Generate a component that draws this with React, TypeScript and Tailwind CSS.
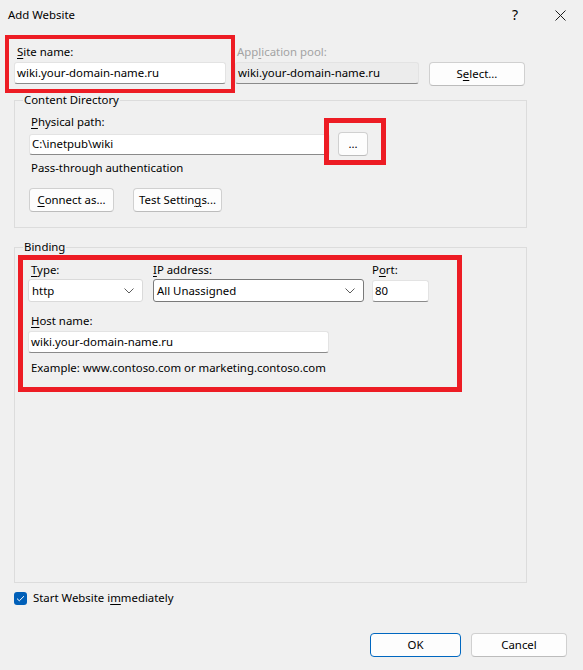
import React from "react";

function U({ children }: { children: React.ReactNode }) {
  return <span className="underline underline-offset-[2px]">{children}</span>;
}

function TextBox({ value, w, h = 22, disabled = false }: { value: string; w: string; h?: number; disabled?: boolean }) {
  return (
    <div
      className={
        (disabled ? "bg-[#ececec] " : "bg-white ") +
        w +
        " border border-[#e3e3e3] border-b-[#8a8a8a] rounded-[3px] flex items-center pl-[2px] whitespace-nowrap overflow-hidden"
      }
      style={{ height: h }}
    >
      {value}
    </div>
  );
}

function Chevron() {
  return (
    <svg width="10" height="6" viewBox="0 0 10 6" className="shrink-0">
      <path d="M0.5 0.5 L5 5 L9.5 0.5" fill="none" stroke="#5c5c5c" strokeWidth="1" />
    </svg>
  );
}

function Btn({ children, w, primary = false }: { children: React.ReactNode; w: string; primary?: boolean }) {
  return (
    <div
      className={
        w +
        " h-[24px] rounded-[4px] flex items-center justify-center bg-[#fdfdfd] border " +
        (primary ? "border-[#0067c0]" : "border-[#d0d0d0] border-b-[#bcbcbc]")
      }
    >
      {children}
    </div>
  );
}

export default function App() {
  return (
    <div className="relative w-[583px] h-[670px] bg-[#f0f0f0] text-[11.4px] leading-[16px] text-[#000] overflow-hidden font-['Noto_Sans',sans-serif]">
      {/* title bar */}
      <div className="h-[30px] flex items-center">
        <div className="flex-1 pl-[8px]">Add Website</div>
        <div className="w-[46px] h-[30px] flex items-center justify-center text-[14px] pl-[2px]">?</div>
        <div className="w-[46px] h-[30px] flex items-center justify-center">
          <svg width="11" height="11" viewBox="0 0 11 11">
            <path d="M0.5 0.5 L10.5 10.5 M10.5 0.5 L0.5 10.5" stroke="#1c1c1c" strokeWidth="1" />
          </svg>
        </div>
      </div>

      {/* site name row */}
      <div className="mt-[14px] ml-[14px] flex items-start">
        <div className="w-[212px]">
          <div className="h-[16px] pl-[3px]">
            <U>S</U>ite name:
          </div>
          <div className="mt-[2px]">
            <TextBox value="wiki.your-domain-name.ru" w="w-[212px]" />
          </div>
        </div>
        <div className="ml-[9px] w-[184px]">
          <div className="h-[16px] pl-[2px] text-[#a3a3a3]">
            App<U>l</U>ication pool:
          </div>
          <div className="mt-[2px]">
            <TextBox value="wiki.your-domain-name.ru" w="w-[184px]" disabled />
          </div>
        </div>
        <div className="ml-[10px] mt-[18px]">
          <Btn w="w-[96px]">
            S<U>e</U>lect...
          </Btn>
        </div>
      </div>

      {/* content directory */}
      <div className="mt-[14px] ml-[14px] w-[513px] border border-[#dcdcdc] pb-[15px]">
        <div className="-mt-[9px] ml-[8px] px-[1px] w-fit h-[16px] bg-[#f0f0f0]">Content Directory</div>
        <div className="mt-[6px] ml-[16px] h-[16px]">
          <U>P</U>hysical path:
        </div>
        <div className="mt-[2px] ml-[14px] flex items-center h-[24px]">
          <TextBox value="C:\inetpub\wiki" w="w-[301px]" h={21} />
          <div className="ml-[8px]">
            <Btn w="w-[30px]">...</Btn>
          </div>
        </div>
        <div className="mt-[4px] ml-[16px] h-[16px]">Pass-through authentication</div>
        <div className="mt-[12px] ml-[14px] flex gap-[19px]">
          <Btn w="w-[85px]">
            <U>C</U>onnect as...
          </Btn>
          <Btn w="w-[89px]">
            Test Settin<U>g</U>s...
          </Btn>
        </div>
      </div>

      {/* binding */}
      <div className="mt-[19px] ml-[14px] w-[513px] h-[336px] border border-[#dcdcdc]">
        <div className="-mt-[9px] ml-[8px] px-[1px] w-fit h-[16px] bg-[#f0f0f0]">Binding</div>
        <div className="mt-[7px] ml-[13px] flex">
          <div className="w-[115px]">
            <div className="h-[16px] pl-[3px]">
              <U>T</U>ype:
            </div>
            <div className="mt-[1px] h-[23px] bg-white border border-[#dadada] rounded-[3px] flex items-center pl-[3px] pr-[8px]">
              <span className="flex-1">http</span>
              <Chevron />
            </div>
          </div>
          <div className="ml-[10px] w-[211px]">
            <div className="h-[16px]">
              <U>I</U>P address:
            </div>
            <div className="mt-[1px] h-[23px] bg-white border border-[#7a7a7a] rounded-[3px] flex items-center pl-[3px] pr-[8px]">
              <span className="flex-1">All Unassigned</span>
              <Chevron />
            </div>
          </div>
          <div className="ml-[8px] w-[57px]">
            <div className="h-[16px]">
              P<U>o</U>rt:
            </div>
            <div className="mt-[2px]">
              <TextBox value="80" w="w-[57px]" />
            </div>
          </div>
        </div>
        <div className="mt-[11px] ml-[16px] h-[16px]">
          <U>H</U>ost name:
        </div>
        <div className="mt-[2px] ml-[13px]">
          <TextBox value="wiki.your-domain-name.ru" w="w-[301px]" />
        </div>
        <div className="mt-[7px] ml-[16px] h-[16px]">Example: www.contoso.com or marketing.contoso.com</div>
      </div>

      {/* checkbox */}
      <div className="mt-[7px] ml-[14px] h-[16px] flex items-center">
        <div className="w-[13px] h-[13px] rounded-[3px] bg-[#005fb8] flex items-center justify-center">
          <svg width="9" height="7" viewBox="0 0 9 7">
            <path d="M1 3.6 L3.3 5.8 L8 1.2" fill="none" stroke="#ffffff" strokeWidth="1" />
          </svg>
        </div>
        <div className="ml-[6px]">
          Start Website i<U>m</U>mediately
        </div>
      </div>

      {/* bottom buttons */}
      <div className="mt-[27px] pr-[16px] flex justify-end gap-[10px]">
        <Btn w="w-[91px]" primary>
          OK
        </Btn>
        <Btn w="w-[96px]">Cancel</Btn>
      </div>

      {/* red annotation boxes */}
      <div className="absolute left-[5px] top-[35px] w-[230px] h-[58px] border-[4px] border-[#ed1c24]" />
      <div className="absolute left-[324px] top-[118px] w-[62px] h-[47px] border-[5px] border-[#ed1c24]" />
      <div className="absolute left-[18px] top-[255px] w-[444px] h-[137px] border-[5px] border-[#ed1c24]" />
    </div>
  );
}
